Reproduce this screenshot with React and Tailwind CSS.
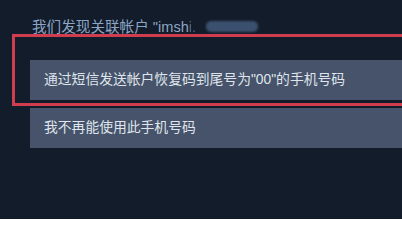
export default function App() {
  return (
    <div
      className="w-[402px] h-[219px] overflow-hidden bg-[#131c2b] text-[#dde4ec]"
      style={{ fontFamily: '"Liberation Sans", "Noto Sans CJK SC", sans-serif' }}
    >
      {/* heading */}
      <div className="pl-[32px] pt-[18px] h-[34px] flex items-start">
        <span className="text-[14.6px] leading-[18px] text-[#8ca5c3] whitespace-nowrap">
          我们发现关联帐户 "imsh
        </span>
        <span className="text-[14.6px] leading-[18px] text-[#8ca5c3] opacity-50 blur-[0.5px]">i.</span>
        <span className="ml-[10px] mt-[3px] w-[52px] h-[11px] rounded-[5px] bg-[#3b506e] blur-[1px]" />
      </div>

      {/* highlighted option */}
      <div className="ml-[12px] border-[3px] border-r-0 border-[#d03d4e] pt-[23px] pb-[3px] pl-[15px]">
        <button className="w-full h-[40px] bg-[#47536a] text-left pl-[14px] text-[13.8px] text-[#dfe5ec] whitespace-nowrap">
          通过短信发送帐户恢复码到尾号为"00"的手机号码
        </button>
      </div>

      {/* other option */}
      <div className="pl-[30px] pt-[2px]">
        <button className="w-full h-[40px] bg-[#47536a] text-left pl-[14px] text-[13.8px] text-[#dfe5ec] whitespace-nowrap">
          我不再能使用此手机号码
        </button>
      </div>
    </div>
  );
}
